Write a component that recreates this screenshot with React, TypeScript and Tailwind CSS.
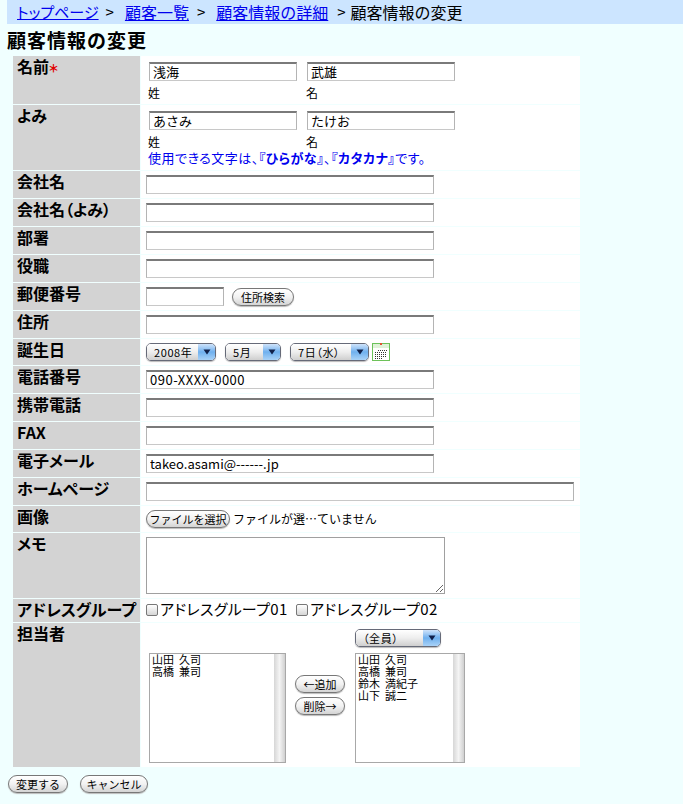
const jp = "font-['Noto_Sans_CJK_JP','Liberation_Sans',sans-serif]";

function Row({ label, h, children }: { label: React.ReactNode; h: string; children?: React.ReactNode }) {
  return (
    <div className={`flex gap-x-px ${h}`}>
      <div className="w-[127px] shrink-0 bg-[#d3d3d3] pl-[4px] text-[16px] leading-[20px] font-bold whitespace-nowrap text-black [font-feature-settings:'palt']">
        {label}
      </div>
      <div className="flex-1 bg-white">{children}</div>
    </div>
  );
}

function TextBox({ w, value = "", track = "" }: { w: string; value?: string; track?: string }) {
  return (
    <input
      readOnly
      value={value}
      className={`${w} ${track} block h-[19px] shrink-0 border border-[#b4b4b4] border-t-2 border-t-[#7a7a7a] border-b-[#c8c8c8] bg-white px-[3px] text-[13px] text-black outline-none`}
    />
  );
}

function FullRow({ label, value, w = "w-[288px]", track }: { label: string; value?: string; w?: string; track?: string }) {
  return (
    <Row label={label} h="h-[27px]">
      <div className="flex pl-[5px] pt-[4px]">
        <TextBox w={w} value={value} track={track} />
      </div>
    </Row>
  );
}

function AquaButton({ w, children }: { w: string; children: React.ReactNode }) {
  return (
    <button className={`${w} h-[18px] shrink-0 rounded-full border border-[#777777] bg-gradient-to-b from-white via-[#f2f2f2] to-[#d4d4d4] text-[11px] leading-[14px] text-black shadow-[0_1px_1px_#bbbbbb]`}>
      {children}
    </button>
  );
}

function AquaSelect({ w, children }: { w: string; children: React.ReactNode }) {
  return (
    <div className={`${w} flex h-[18px] shrink-0 overflow-hidden rounded-[5px] border border-[#666a78] shadow-[0_1px_1px_#bbbbbb]`}>
      <div className="flex-1 bg-gradient-to-b from-white via-[#eeeeee] to-[#cfcfcf] pl-[7px] text-[11px] leading-[16px] tracking-[0.6px] whitespace-nowrap text-black [font-feature-settings:'palt']">
        {children}
      </div>
      <div className="flex w-[17px] items-center justify-center bg-gradient-to-b from-[#cfe3fa] via-[#6fb0ee] to-[#a9d2f7]">
        <svg width="8" height="6" viewBox="0 0 8 6">
          <path d="M0.5 0.5h7L4 5.5z" fill="#10204a" />
        </svg>
      </div>
    </div>
  );
}

function ListBox({ names }: { names: string[] }) {
  return (
    <div className="flex h-[110px] shrink-0 border border-[#a8a8a8] bg-white">
      <div className="-mt-[1px] flex-1 pl-[2px] text-[11px] leading-[12px] whitespace-pre text-black">
        {names.map((n) => (
          <div key={n}>{n}</div>
        ))}
      </div>
      <div className="w-[11px] bg-gradient-to-r from-[#d6d6d6] via-[#f4f4f4] to-[#d0d0d0]" />
    </div>
  );
}

function CheckItem({ w, label }: { w: string; label: string }) {
  return (
    <div className={`${w} flex shrink-0 items-center gap-[2px]`}>
      <div className="mt-[2px] h-[12px] w-[12px] rounded-[2px] border border-[#777777] bg-gradient-to-b from-white to-[#d6d6d6]" />
      <span className="text-[15px] leading-[20px] tracking-[0.3px] text-black [font-feature-settings:'palt']">{label}</span>
    </div>
  );
}

function NameInputs({ a, b }: { a: string; b: string }) {
  return (
    <>
      <div className="flex gap-[10px] pl-[8px] pt-[6px]">
        <TextBox w="w-[148px]" value={a} />
        <TextBox w="w-[148px]" value={b} />
      </div>
      <div className="flex pl-[7px] pt-[4px] text-[12px] leading-[16px] text-black">
        <span className="w-[158px]">姓</span>
        <span>名</span>
      </div>
    </>
  );
}

export default function App() {
  return (
    <div className={`${jp} min-h-[804px] w-[683px] bg-[#f0ffff]`}>
      <div className="ml-[7px] flex h-[24px] items-center bg-[#cce5ff] pl-[10px] text-[16px] leading-[20px] text-black">
        <a className="text-[15px] text-[#0000ee] underline [font-feature-settings:'palt']">トップページ</a>
        <span className="ml-[7px] mr-[11px] text-[15px]">&gt;</span>
        <a className="text-[#0000ee] underline">顧客一覧</a>
        <span className="ml-[8px] mr-[11px] text-[15px]">&gt;</span>
        <a className="text-[#0000ee] underline">顧客情報の詳細</a>
        <span className="ml-[9px] mr-[5px] text-[15px]">&gt;</span>
        <span>顧客情報の変更</span>
      </div>

      <h1 className="ml-[7px] mt-[4px] h-[28px] text-[19px] leading-[24px] font-bold tracking-[1px] text-black">顧客情報の変更</h1>

      <div className="ml-[13px] flex w-[567px] flex-col gap-y-px">
        <Row label={<>名前<span className="text-[11px] font-black text-[#e00000]">＊</span></>} h="h-[48px]">
          <NameInputs a="浅海" b="武雄" />
        </Row>
        <Row label="よみ" h="h-[65px]">
          <NameInputs a="あさみ" b="たけお" />
          <div className="pl-[7px] text-[13px] leading-[15px] tracking-[0.5px] text-[#0000ee] [font-feature-settings:'palt']">
            使用できる文字は、<b>『ひらがな』</b>、<b>『カタカナ』</b>です。
          </div>
        </Row>
        <FullRow label="会社名" />
        <FullRow label="会社名（よみ）" />
        <FullRow label="部署" />
        <FullRow label="役職" />
        <Row label="郵便番号" h="h-[27px]">
          <div className="flex items-center gap-[8px] pl-[5px] pt-[4px]">
            <TextBox w="w-[78px]" />
            <AquaButton w="w-[62px]">住所検索</AquaButton>
          </div>
        </Row>
        <FullRow label="住所" />
        <Row label="誕生日" h="h-[26px]">
          <div className="flex pl-[5px] pt-[4px]">
            <AquaSelect w="w-[70px]">2008年</AquaSelect>
            <div className="ml-[9px]"><AquaSelect w="w-[56px]">5月</AquaSelect></div>
            <div className="ml-[9px]"><AquaSelect w="w-[79px]">7日（水）</AquaSelect></div>
            <svg className="ml-[3px]" width="18" height="18" viewBox="0 0 18 18">
              <rect x="0.5" y="0.5" width="17" height="17" fill="#ffffff" stroke="#6cc25a" />
              <rect x="1" y="1" width="16" height="4" fill="#dff2d8" />
              <rect x="8" y="0" width="2" height="2" fill="#e05030" />
              <path d="M6 7.5h9M3 9.5h12M3 11.5h12M3 13.5h12M3 15.5h8" stroke="#333333" strokeDasharray="1 1" />
            </svg>
          </div>
        </Row>
        <FullRow label="電話番号" value="090-XXXX-0000" track="tracking-[0.5px]" />
        <FullRow label="携帯電話" />
        <FullRow label="FAX" />
        <FullRow label="電子メール" value="takeo.asami@------.jp" />
        <FullRow label="ホームページ" w="w-[428px]" />
        <Row label="画像" h="h-[26px]">
          <div className="flex items-center gap-[3px] pl-[5px] pt-[4px]">
            <AquaButton w="w-[84px]">ファイルを選択</AquaButton>
            <span className="text-[12px] leading-[18px] text-black">ファイルが選…ていません</span>
          </div>
        </Row>
        <Row label="メモ" h="h-[65px]">
          <div className="pl-[5px] pt-[4px]">
            <textarea readOnly className="block h-[57px] w-[299px] border border-[#a0a0a0] bg-white outline-none" />
          </div>
        </Row>
        <Row label="アドレスグループ" h="h-[23px]">
          <div className="flex pl-[5px]">
            <CheckItem w="w-[150px]" label="アドレスグループ01" />
            <CheckItem w="w-[150px]" label="アドレスグループ02" />
          </div>
        </Row>
        <Row label="担当者" h="h-[144px]">
          <div className="flex pl-[8px] pt-[6px]">
            <div className="w-[137px] shrink-0 pt-[24px]">
              <ListBox names={["山田  久司", "高橋  兼司"]} />
            </div>
            <div className="ml-[9px] flex w-[50px] shrink-0 flex-col gap-[4px] pt-[46px]">
              <AquaButton w="w-[50px]">←追加</AquaButton>
              <AquaButton w="w-[50px]">削除→</AquaButton>
            </div>
            <div className="ml-[10px] w-[110px] shrink-0">
              <AquaSelect w="w-[86px]">（全員）</AquaSelect>
              <div className="pt-[6px]">
                <ListBox names={["山田  久司", "高橋  兼司", "鈴木  満紀子", "山下  誠二"]} />
              </div>
            </div>
          </div>
        </Row>
      </div>

      <div className="ml-[8px] mt-[8px] flex gap-[12px]">
        <AquaButton w="w-[60px]">変更する</AquaButton>
        <AquaButton w="w-[68px]">キャンセル</AquaButton>
      </div>
    </div>
  );
}
